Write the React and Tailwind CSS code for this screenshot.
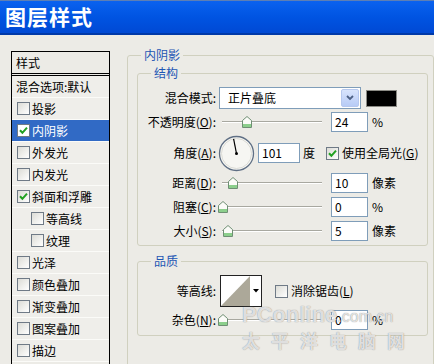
import React from 'react';

const items = [
  { label: '投影' },
  { label: '内阴影', checked: true, selected: true },
  { label: '外发光' },
  { label: '内发光' },
  { label: '斜面和浮雕', checked: true },
  { label: '等高线', sub: true },
  { label: '纹理', sub: true },
  { label: '光泽' },
  { label: '颜色叠加' },
  { label: '渐变叠加' },
  { label: '图案叠加' },
  { label: '描边' },
];

const Check = ({ checked, className = '' }) => (
  <span
    className={`inline-flex h-[13px] w-[13px] shrink-0 items-center justify-center border border-[#6f7a86] bg-linear-to-br from-[#dcdcd6] to-white ${className}`}
  >
    {checked && (
      <svg width="9" height="9" viewBox="0 0 9 9">
        <path d="M1 4.2 L3.4 6.8 L8 1.6" stroke="#21a121" strokeWidth="2" fill="none" />
      </svg>
    )}
  </span>
);

const Thumb = ({ left }) => (
  <svg
    className="absolute top-[4px]"
    style={{ left: left - 5 }}
    width="10"
    height="12"
    viewBox="0 0 10 12"
  >
    <path d="M0.5 11.5 V4.5 L5 0.5 L9.5 4.5 V11.5 Z" fill="#fbfbf8" stroke="#6f8f74" />
    <path d="M1 8 H9 V11 H1 Z" fill="#8ccf8c" />
  </svg>
);

const Slider = ({ pos }) => (
  <div className="relative ml-[6px] h-[20px] w-[100px]">
    <div className="mt-[9px] h-[2px] border-t border-[#a8a8a0] bg-white" />
    <Thumb left={pos} />
  </div>
);

const Field = ({ value, width = 'w-[37px]', className = 'ml-[9px]' }) => (
  <div
    className={`h-[20px] ${width} ${className} border border-[#7f9db9] bg-white pl-[3px] leading-[18px]`}
  >
    {value}
  </div>
);

const Label = ({ children }) => (
  <div className="w-[78px] shrink-0 text-right leading-[16px]">{children}</div>
);

const Dial = () => (
  <svg className="ml-[2px]" width="37" height="37" viewBox="0 0 37 37">
    <circle cx="18.5" cy="18.5" r="17" fill="#f6f6f2" stroke="#5f6f84" strokeWidth="1.3" />
    <circle cx="18.5" cy="18.5" r="15" fill="none" stroke="#dcdcd6" strokeWidth="1" />
    <line x1="18.5" y1="18.5" x2="15.6" y2="3.8" stroke="#000" strokeWidth="1.2" />
    <circle cx="18.5" cy="18.5" r="1.5" fill="#000" />
  </svg>
);

const SliderRow = ({ label, pos, value, unit, h }) => (
  <div className={`flex items-center ${h}`}>
    <Label>{label}</Label>
    <Slider pos={pos} />
    <Field value={value} />
    <span className="ml-[4px]">{unit}</span>
  </div>
);

export default function App() {
  return (
    <div className="relative h-[364px] w-[434px] overflow-hidden bg-[#ecebe6] font-['Noto_Sans_CJK_SC',sans-serif] text-[12px] text-black">
      <div className="h-[35px] border-t border-t-[#5d7fb4] border-b-2 border-b-[#0039a8] bg-linear-to-b from-[#0b62ef] via-[#0054e2] to-[#0049d4] pl-[5px] text-[21px] font-bold leading-[31px] tracking-[1px] text-white">
        图层样式
      </div>

      <div className="flex">
        {/* style list */}
        <div className="ml-[11px] mt-[16px] w-[100px] border-x border-black">
          <div className="h-[23px] border-y border-black pl-[4px] leading-[21px]">样式</div>
          <div className="mt-[1px] border-t border-black bg-[#efeeea]">
            <div className="h-[22px] border-b border-[#fbfbf8] pl-[4px] leading-[21px]">混合选项:默认</div>
            {items.map((item) => (
              <div
                key={item.label}
                className={`flex h-[22px] items-center gap-[2px] border-b border-[#fbfbf8] ${
                  item.sub ? 'pl-[19px]' : 'pl-[5px]'
                } ${item.selected ? 'bg-[#316ac5] text-white' : ''}`}
              >
                <Check checked={item.checked} className={item.selected ? 'bg-none bg-white' : ''} />
                <span className="leading-[16px]">{item.label}</span>
              </div>
            ))}
          </div>
        </div>

        {/* settings */}
        <fieldset className="ml-[17px] mt-[12px] h-[340px] w-[310px] rounded-[3px] border border-[#d0d0bf] pl-[9px] pt-[2px]">
          <legend className="ml-[4px] px-[3px] leading-[16px] text-[#1d56b4]">内阴影</legend>

          <fieldset className="w-[291px] rounded-[3px] border border-[#d0d0bf] pb-[3px] pt-[6px]">
            <legend className="ml-[13px] px-[3px] leading-[16px] text-[#1d56b4]">结构</legend>

            <div className="flex h-[22px] items-center">
              <Label>混合模式:</Label>
              <div className="ml-[3px] flex h-[22px] w-[142px] items-center border border-[#7f9db9] bg-white p-[1px]">
                <span className="flex-1 pl-[7px] leading-[16px]">正片叠底</span>
                <span className="flex h-full w-[18px] items-center justify-center rounded-[2px] border border-[#b6c8ee] bg-linear-to-b from-[#d8e4fc] to-[#b7cbf6]">
                  <svg width="8" height="6" viewBox="0 0 8 6">
                    <path d="M1 1 L4 4 L7 1" stroke="#4d6185" strokeWidth="1.8" fill="none" />
                  </svg>
                </span>
              </div>
              <div className="ml-[5px] h-[17px] w-[31px] border border-[#8a8a84] bg-black" />
            </div>

            <SliderRow label={<>不透明度(<u>O</u>):</>} pos={25} value="24" unit="%" h="h-[26px]" />

            <div className="flex h-[36px] items-center">
              <Label>角度(<u>A</u>):</Label>
              <Dial />
              <Field value="101" width="w-[42px]" className="ml-[3px]" />
              <span className="ml-[3px]">度</span>
              <Check checked className="ml-[11px]" />
              <span className="ml-[3px]">使用全局光(<u>G</u>)</span>
            </div>

            <SliderRow label={<>距离(<u>D</u>):</>} pos={11} value="10" unit="像素" h="h-[24px]" />
            <SliderRow label={<>阻塞(<u>C</u>):</>} pos={1} value="0" unit="%" h="h-[24px]" />
            <SliderRow label={<>大小(<u>S</u>):</>} pos={6} value="5" unit="像素" h="h-[23px]" />
          </fieldset>

          <fieldset className="mt-[7px] w-[291px] rounded-[3px] border border-[#d0d0bf] pb-[4px] pt-[6px]">
            <legend className="ml-[13px] px-[3px] leading-[16px] text-[#1d56b4]">品质</legend>

            <div className="flex h-[32px] items-center">
              <Label>等高线:</Label>
              <div className="ml-[4px] flex h-[32px] w-[42px] border border-[#222] bg-white">
                <svg width="29" height="30" viewBox="0 0 29 30">
                  <path d="M0 30 L29 0 V30 Z" fill="#aca899" />
                </svg>
                <span className="flex flex-1 items-center justify-center">
                  <svg width="6" height="4" viewBox="0 0 6 4">
                    <path d="M0 0 H6 L3 3.5 Z" fill="#000" />
                  </svg>
                </span>
              </div>
              <Check className="ml-[13px]" />
              <span className="ml-[3px]">消除锯齿(<u>L</u>)</span>
            </div>

            <div className="mt-[2px] flex h-[22px] items-center">
              <Label>杂色(<u>N</u>):</Label>
              <Slider pos={1} />
              <Field value="0" />
              <span className="ml-[4px]">%</span>
            </div>
          </fieldset>
        </fieldset>
      </div>

      {/* watermark */}
      <div className="pointer-events-none absolute left-[242px] top-[303px] text-white/75 [text-shadow:0_0_1px_#777]">
        <div className="font-['Liberation_Sans',sans-serif] text-[22px] font-bold leading-[24px]">
          PConline<span className="text-[16px] font-normal">.com.cn</span>
        </div>
        <div className="mt-[1px] text-[18px] font-bold leading-[20px] tracking-[11px]">太平洋电脑网</div>
      </div>
    </div>
  );
}
